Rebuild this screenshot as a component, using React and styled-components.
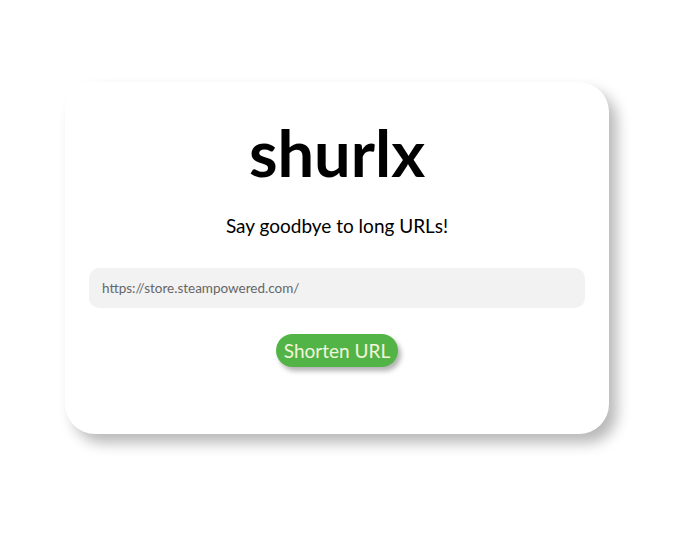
import React from "react";
import styled, { createGlobalStyle } from "styled-components";

const GlobalStyle = createGlobalStyle`
  html, body {
    margin: 0;
    padding: 0;
    background: #ffffff;
    font-family: Lato, "Noto Sans", sans-serif;
  }
`;

const Page = styled.div`
  display: flex;
  justify-content: center;
  padding: 82px 10px 0 0;
  height: 536px;
  box-sizing: border-box;
`;

const Card = styled.div`
  width: 544px;
  height: 352px;
  box-sizing: border-box;
  padding: 32px 24px 0;
  background: #fff;
  border-radius: 30px;
  box-shadow: 8px 9px 14px rgba(0, 0, 0, 0.28);
  display: flex;
  flex-direction: column;
  align-items: center;
`;

const Logo = styled.h1`
  margin: 0;
  font-size: 65px;
  font-weight: 700;
  line-height: 76px;
  color: #000;
`;

const Tagline = styled.p`
  margin: 24px 0 0;
  font-size: 19px;
  line-height: 24px;
  color: #000;
`;

const UrlInput = styled.input`
  margin-top: 30px;
  width: 100%;
  height: 40px;
  box-sizing: border-box;
  border: none;
  outline: none;
  border-radius: 10px;
  background: #f2f2f2;
  padding: 0 13px;
  font-family: inherit;
  font-size: 13.5px;
  color: #333;

  &::placeholder {
    color: #666;
  }
`;

const ShortenButton = styled.button`
  margin-top: 26px;
  height: 33px;
  padding: 0 8px;
  border: none;
  border-radius: 17px;
  background: #52b447;
  color: #f4f4dc;
  font-family: inherit;
  font-size: 19px;
  box-shadow: 3px 4px 5px rgba(0, 0, 0, 0.3);
  cursor: pointer;
`;

export default function App() {
  return (
    <>
      <GlobalStyle />
      <Page>
        <Card>
          <Logo>shurlx</Logo>
          <Tagline>Say goodbye to long URLs!</Tagline>
          <UrlInput placeholder="https://store.steampowered.com/" />
          <ShortenButton>Shorten URL</ShortenButton>
        </Card>
      </Page>
    </>
  );
}
